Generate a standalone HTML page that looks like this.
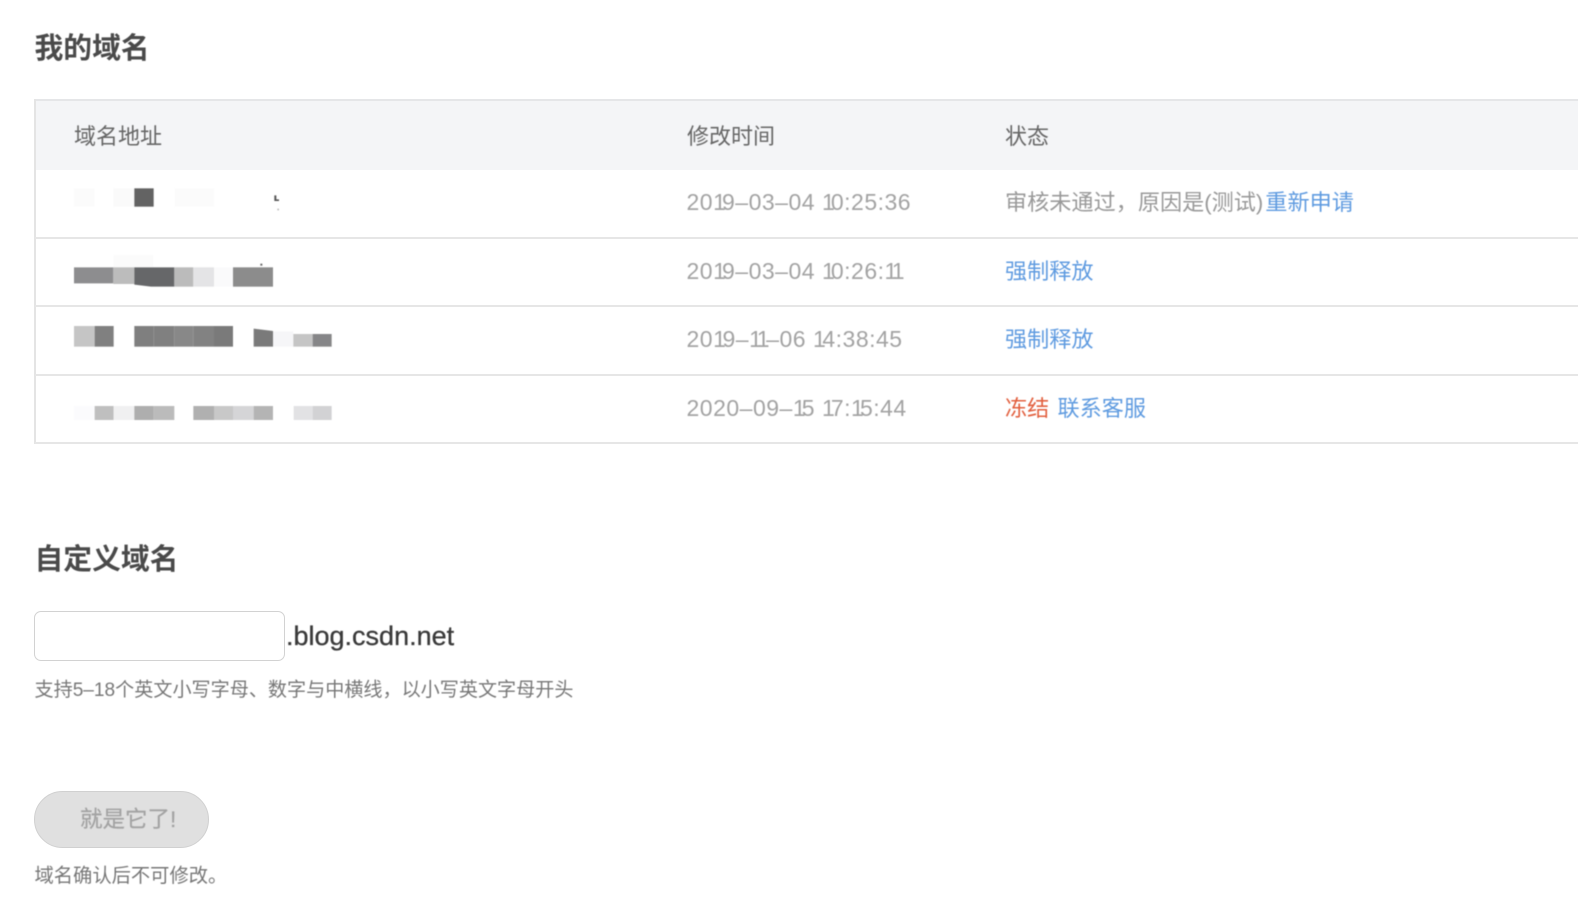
<!DOCTYPE html>
<html lang="zh-CN">
<head>
<meta charset="utf-8">
<title>我的域名</title>
<style>
html,body{margin:0;padding:0;background:#fff;}
body{width:1578px;height:904px;overflow:hidden;position:relative;font-family:"Liberation Sans","Noto Sans CJK SC",sans-serif;}
.t{position:absolute;white-space:nowrap;line-height:1;filter:blur(.45px);}
.h{font-size:28.8px;font-weight:700;color:#4a4a4a;left:34.5px;}
.th{font-size:22px;color:#666;}
.d{font-size:23px;color:#a3a3a3;left:686.5px;letter-spacing:.5px;}
.d i{font-style:normal;letter-spacing:-3.9px;}
.s{font-size:22.15px;left:1005px;color:#999;}
a{color:#5f9be0;text-decoration:none;}
.line{position:absolute;left:35px;right:0;height:2px;background:#e6e6e6;}
</style>
</head>
<body>
<div class="t h" style="top:35px">我的域名</div>

<div style="position:absolute;left:34px;top:99px;width:1544px;height:71px;background:#f4f5f7;"></div>
<div style="position:absolute;left:34px;top:99px;width:1544px;height:2px;background:#e5e6e8;"></div>
<div style="position:absolute;left:34px;top:99px;width:2px;height:345px;background:#e4e4e4;"></div>
<div class="line" style="top:237px"></div>
<div class="line" style="top:305px"></div>
<div class="line" style="top:374px"></div>
<div class="line" style="top:442px"></div>

<div class="t th" style="left:74px;top:126px">域名地址</div>
<div class="t th" style="left:687px;top:126px">修改时间</div>
<div class="t th" style="left:1005px;top:126px">状态</div>

<svg style="position:absolute;left:30px;top:170px;filter:blur(.5px)" width="320" height="270" viewBox="0 0 960 810">
<rect x="132" y="55" width="62" height="55" fill="#fbfbfb"/>
<rect x="250" y="55" width="62" height="55" fill="#fafafa"/>
<rect x="313" y="55" width="58" height="55" fill="#636363"/>
<rect x="434" y="55" width="118" height="55" fill="#fbfbfb"/>
<path d="M733 76h6v12h8v5h-14z" fill="#555"/>
<rect x="742" y="116" width="5" height="5" fill="#bbb"/>
<rect x="250" y="255" width="120" height="37" fill="#fbfbfb"/>
<path d="M132 292h118v48h-118z" fill="#8d8d8f"/>
<rect x="250" y="292" width="63" height="50" fill="#bcbcbc"/>
<path d="M313 292h120v58h-70l-50-6z" fill="#666769"/>
<rect x="433" y="292" width="57" height="58" fill="#bbb"/>
<rect x="490" y="292" width="62" height="58" fill="#e4e4e6"/>
<rect x="552" y="292" width="57" height="58" fill="#fafafb"/>
<rect x="609" y="292" width="120" height="58" fill="#8c8c8c"/>
<rect x="691" y="281" width="6" height="6" fill="#666"/>
<rect x="132" y="468" width="62" height="62" fill="#c5c5c5"/>
<rect x="194" y="468" width="57" height="62" fill="#808080"/>
<rect x="313" y="468" width="58" height="62" fill="#7f7f7f"/>
<rect x="371" y="468" width="62" height="62" fill="#808080"/>
<rect x="433" y="468" width="57" height="62" fill="#888"/>
<rect x="490" y="468" width="62" height="62" fill="#828282"/>
<rect x="552" y="468" width="57" height="62" fill="#7a7a7a"/>
<path d="M671 476l58 7v47h-58z" fill="#7a7a7a"/>
<rect x="729" y="484" width="61" height="46" fill="#f6f6f8"/>
<rect x="790" y="492" width="58" height="38" fill="#c5c5c5"/>
<rect x="848" y="492" width="57" height="38" fill="#868688"/>
<rect x="132" y="708" width="62" height="42" fill="#fbfbfd"/>
<rect x="194" y="708" width="57" height="42" fill="#bfbfbf"/>
<rect x="251" y="708" width="62" height="42" fill="#f0f0f1"/>
<rect x="313" y="708" width="58" height="42" fill="#aeaeae"/>
<rect x="371" y="708" width="62" height="42" fill="#bbb"/>
<rect x="490" y="708" width="62" height="42" fill="#b0b0b0"/>
<rect x="552" y="708" width="57" height="42" fill="#c8c8c8"/>
<rect x="609" y="708" width="62" height="42" fill="#d5d5d7"/>
<rect x="671" y="708" width="58" height="42" fill="#b4b4b4"/>
<rect x="791" y="708" width="57" height="42" fill="#e2e2e4"/>
<rect x="848" y="708" width="57" height="42" fill="#d2d2d4"/>
</svg>

<div class="t d" style="top:191px">20<i>1</i>9–03–04 <i>1</i>0:25:36</div>
<div class="t d" style="top:260px">20<i>1</i>9–03–04 <i>1</i>0:26:<i>1</i><i>1</i></div>
<div class="t d" style="top:328px">20<i style="letter-spacing:-3.4px">1</i>9–<i style="letter-spacing:-3.4px">1</i><i style="letter-spacing:-3.4px">1</i>–06 <i style="letter-spacing:-3.4px">1</i>4:38:45</div>
<div class="t d" style="top:397px">2020–09–<i>1</i>5 <i>1</i>7:<i>1</i>5:44</div>

<div class="t s" style="top:192px">审核未通过，原因是(测试)<a style="margin-left:2px">重新申请</a></div>
<div class="t s" style="top:261px"><a>强制释放</a></div>
<div class="t s" style="top:329px"><a>强制释放</a></div>
<div class="t s" style="top:398px"><span style="color:#e2603f">冻结</span> <a style="margin-left:2px">联系客服</a></div>

<div class="t h" style="top:545.5px">自定义域名</div>

<div style="position:absolute;left:34px;top:611px;width:249px;height:48px;border:1.5px solid #d2d2d2;border-radius:7px;background:#fff;filter:blur(.3px)"></div>
<div class="t" style="left:286px;top:623px;font-size:27px;font-weight:400;color:#3a3a3a;-webkit-text-stroke:.3px #3a3a3a;">.blog.csdn.net</div>
<div class="t" style="left:34.5px;top:681px;font-size:19.1px;color:#777;">支持5–18个英文小写字母、数字与中横线，以小写英文字母开头</div>

<div style="position:absolute;left:34px;top:791px;width:173px;height:55px;border:1px solid #d0d0d0;border-radius:29px;background:#e0e0e0;"></div>
<div class="t" style="left:80px;top:808.5px;font-size:22.5px;color:#a2a2a2;-webkit-text-stroke:.2px #a2a2a2;">就是它了!</div>
<div class="t" style="left:34.5px;top:867px;font-size:19.3px;color:#777;">域名确认后不可修改。</div>
</body>
</html>
